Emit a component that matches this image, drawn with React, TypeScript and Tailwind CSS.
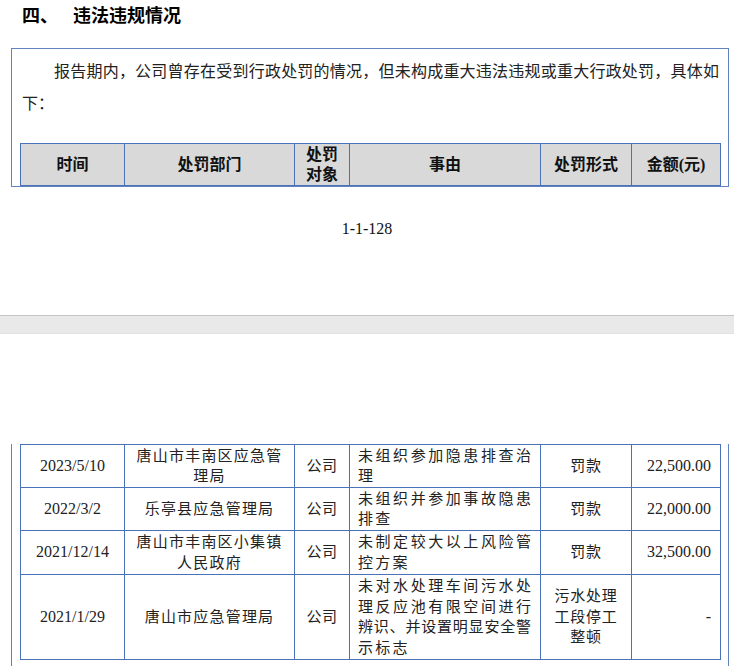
const rows = [
  {
    date: "2023/5/10",
    dept: ["唐山市丰南区应急管", "理局"],
    reason: ["未组织参加隐患排查治"],
    reasonLast: "理",
    form: ["罚款"],
    amount: "22,500.00",
    h: "h-[43px]",
  },
  {
    date: "2022/3/2",
    dept: ["乐亭县应急管理局"],
    reason: ["未组织并参加事故隐患"],
    reasonLast: "排查",
    form: ["罚款"],
    amount: "22,000.00",
    h: "h-[43px]",
  },
  {
    date: "2021/12/14",
    dept: ["唐山市丰南区小集镇", "人民政府"],
    reason: ["未制定较大以上风险管"],
    reasonLast: "控方案",
    form: ["罚款"],
    amount: "32,500.00",
    h: "h-[44px]",
  },
  {
    date: "2021/1/29",
    dept: ["唐山市应急管理局"],
    reason: ["未对水处理车间污水处", "理反应池有限空间进行", "辨识、并设置明显安全警"],
    reasonLast: "示标志",
    form: ["污水处理", "工段停工", "整顿"],
    amount: "-",
    h: "h-[85px]",
  },
];

const cell = "border border-[#4a72ba] p-0 align-middle";

function Cols() {
  return (
    <colgroup>
      <col className="w-[104px]" />
      <col className="w-[170px]" />
      <col className="w-[55px]" />
      <col className="w-[191px]" />
      <col className="w-[91px]" />
      <col className="w-[89px]" />
    </colgroup>
  );
}

export default function App() {
  return (
    <main className="w-[734px] h-[666px] overflow-hidden bg-white text-[#222] font-['Liberation_Serif','Noto_Sans_CJK_SC',serif]">
      {/* page 1 */}
      <section>
        <h2 className="h-[29px] leading-[29px] pl-[22px] text-[18px] font-bold text-black font-['Noto_Sans_CJK_SC',sans-serif]">
          <span>四、</span>
          <span className="ml-[15px]">违法违规情况</span>
        </h2>
        <div className="mt-[19px] ml-[11px] w-[718px] border border-[#6283bd]">
          <p className="pt-[5px] pl-[10px] pr-[9px] text-[16px] leading-[32px] indent-[32px] text-justify font-['Noto_Sans_CJK_SC',serif]">
            报告期内，公司曾存在受到行政处罚的情况，但未构成重大违法违规或重大行政处罚，具体如下：
          </p>
          <table className="mt-[25px] ml-[8px] w-[700px] table-fixed border-collapse">
            <Cols />
            <thead>
              <tr className="h-[42px] bg-[#d9d9d9] text-[16px] leading-[20px] font-bold text-[#111] font-['Liberation_Serif','Noto_Sans_CJK_SC',sans-serif]">
                <th className={cell}>时间</th>
                <th className={cell}>处罚部门</th>
                <th className={cell}>
                  处罚
                  <br />
                  对象
                </th>
                <th className={cell}>事由</th>
                <th className={cell}>处罚形式</th>
                <th className={cell}>金额(元)</th>
              </tr>
            </thead>
          </table>
        </div>
        <p className="mt-[32px] text-center text-[16px] leading-[20px] text-[#111]">1-1-128</p>
        <div className="h-[76px]" />
      </section>

      {/* page gap */}
      <div className="h-[19px] border-t border-[#c4c4c4] border-b border-b-[#e2e2e2] bg-[#e9e9e9]" />

      {/* page 2 */}
      <section className="pt-[110px]">
        <div className="ml-[11px] w-[718px] border-x border-[#6283bd] pb-[40px]">
          <table className="ml-[8px] w-[700px] table-fixed border-collapse text-[15px] leading-[20.5px]">
            <Cols />
            <tbody>
              {rows.map((r) => (
                <tr key={r.date} className={r.h}>
                  <td className={`${cell} text-center text-[16px]`}>{r.date}</td>
                  <td className={`${cell} text-center tracking-[1.2px]`}>
                    {r.dept.map((d) => (
                      <span key={d} className="block">
                        {d}
                      </span>
                    ))}
                  </td>
                  <td className={`${cell} text-center tracking-[0.5px]`}>公司</td>
                  <td className={`${cell} pl-[8px] pr-[9px]`}>
                    {r.reason.map((t) => (
                      <span key={t} className="block text-justify [text-align-last:justify]">
                        {t}
                      </span>
                    ))}
                    <span className="block tracking-[2.2px]">{r.reasonLast}</span>
                  </td>
                  <td className={`${cell} text-center tracking-[0.8px]`}>
                    {r.form.map((f) => (
                      <span key={f} className="block">
                        {f}
                      </span>
                    ))}
                  </td>
                  <td className={`${cell} text-right pr-[9px] text-[16px]`}>{r.amount}</td>
                </tr>
              ))}
            </tbody>
          </table>
        </div>
      </section>
    </main>
  );
}
